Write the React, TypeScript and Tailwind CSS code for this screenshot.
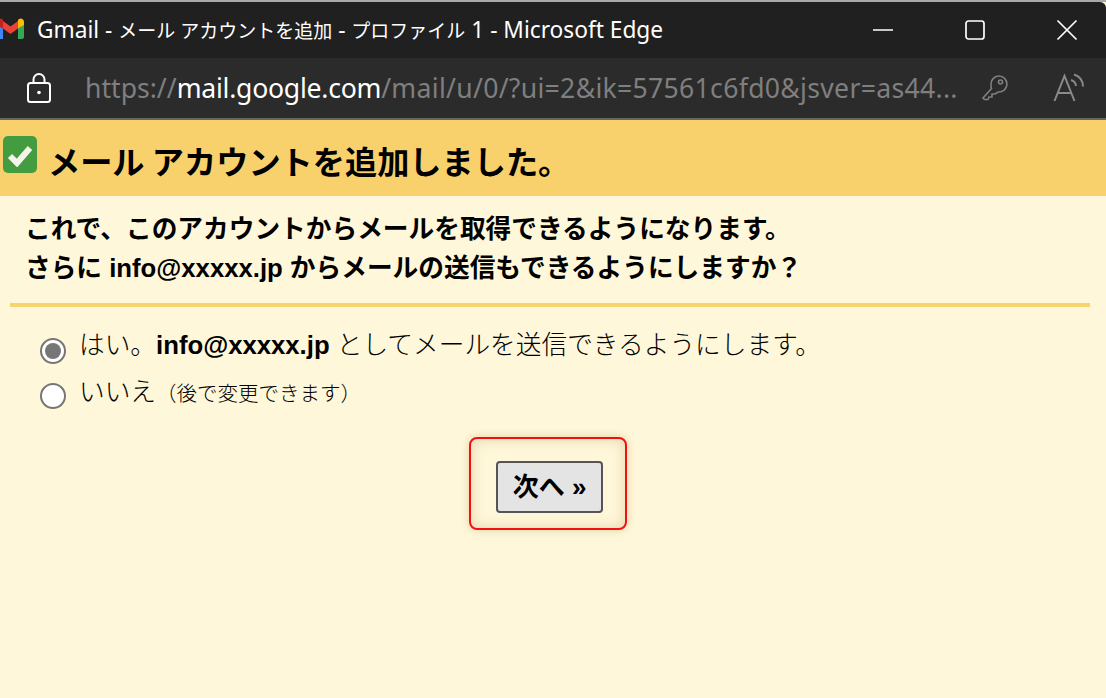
import React from 'react';

const sans = "font-['Noto_Sans','Noto_Sans_CJK_JP',sans-serif]";
const arial = "font-['Liberation_Sans','Noto_Sans_CJK_JP',sans-serif]";

const GmailLogo = () => (
    <svg width="27" height="21" viewBox="0 0 27 21" className="shrink-0 ml-[-3px] mt-[-3px]">
        <path d="M0 6.500l6 4V21H2a2 2 0 0 1-2-2z" fill="#4285f4" />
        <path d="M21 21V10.500l6-4V19a2 2 0 0 1-2 2z" fill="#34a853" />
        <path d="M21 10.500V2l.8-.8C24-.5 27 1 27 4v3z" fill="#fbbc04" />
        <path d="M6 10.500V3l7.500 5.600L21 3v7.500L13.500 16z" fill="#ea4335" />
        <path d="M0 7V4C0 1 3-.5 5 1l1 .8v8.700z" fill="#c5221f" />
    </svg>
);

const Radio = ({ checked }: { checked?: boolean }) => (
    <span className="w-[26px] h-[26px] rounded-full border-[2px] border-[#767676] bg-white flex items-center justify-center shrink-0">
        {checked && <span className="w-[16px] h-[16px] rounded-full bg-[#767676]" />}
    </span>
);

export default function App() {
    return (
        <div className={`w-[1106px] h-[698px] overflow-hidden flex flex-col bg-[#fff7d9] ${sans}`}>
            {/* window chrome */}
            <div className="h-[2px] bg-[#a9a9a9]" />
            <div className="h-[56px] bg-[#202020] flex items-center text-white rounded-tr-[6px]">
                <GmailLogo />
                <span className="ml-[13px] text-[22.700px] leading-none whitespace-nowrap">Gmail - <span className="text-[19px]">メール アカウントを追加</span> - <span className="text-[19px]">プロファイル</span> 1 - Microsoft Edge</span>
                <div className="ml-auto flex items-center">
                    <svg width="22" height="22" viewBox="0 0 22 22" className="mr-[70px]"><path d="M1 11h20" stroke="#fff" strokeWidth="1.500" /></svg>
                    <svg width="22" height="22" viewBox="0 0 22 22" className="mr-[70px]"><rect x="2" y="2" width="18" height="18" rx="2.500" fill="none" stroke="#fff" strokeWidth="1.700" /></svg>
                    <svg width="22" height="22" viewBox="0 0 22 22" className="mr-[28px]"><path d="M1.500 1.500l19 19M20.500 1.500l-19 19" stroke="#fff" strokeWidth="1.700" /></svg>
                </div>
            </div>
            <div className="h-[60px] bg-[#2b2b2b] flex items-center">
                <svg width="26" height="32" viewBox="0 0 26 32" className="ml-[26px] shrink-0">
                    <rect x="2" y="11" width="22" height="19" rx="2.500" fill="none" stroke="#fff" strokeWidth="2" />
                    <path d="M7.500 11V7.500a5.500 5.500 0 0 1 11 0V11" fill="none" stroke="#fff" strokeWidth="2" />
                    <circle cx="13" cy="20.500" r="1.800" fill="#fff" />
                </svg>
                <span className="ml-[33px] text-[26.600px] leading-none whitespace-nowrap text-[#7f7f7f]">
                    https://<span className="text-white tracking-[-0.25px]">mail.google.com</span><span className="tracking-[0.3px]">/mail/u/0/?ui=2&amp;ik=57561c6fd0&amp;jsver=as44...</span>
                </span>
                <div className="ml-auto flex items-center">
                    <svg width="28" height="28" viewBox="0 0 28 28" className="mr-[44px]" fill="none" stroke="#7f7f7f" strokeWidth="1.600">
                        <path d="M10 11a8 8 0 1 1 7 7l-3 2h-3v3h-3l-1 2.500H3.500L2 24l8.500-9.500A8 8 0 0 1 10 11z" />
                        <circle cx="19.500" cy="8" r="2" />
                    </svg>
                    <svg width="32" height="30" viewBox="0 0 32 30" className="mr-[21px]" fill="none" stroke="#8a8a8a" strokeWidth="2">
                        <path d="M1.500 28L11.500 3l10 25M5 20h13" />
                        <path d="M18 7a7 7 0 0 1 5 6M21 1.500a12 12 0 0 1 9 12" />
                    </svg>
                </div>
            </div>
            <div className="h-[2px] bg-[#666666]" />

            {/* success banner */}
            <div className="h-[76px] bg-[#f8d06c] flex shrink-0 pl-[3px]">
                <span className="mt-[16px] w-[34px] h-[37px] rounded-[5px] bg-[#439c3f] flex items-center justify-center shrink-0">
                    <svg width="26" height="24" viewBox="0 0 26 24"><path d="M3 13l7 7L23 5" fill="none" stroke="#f4f4ea" strokeWidth="6" /></svg>
                </span>
                <h1 className="ml-[11px] mt-[20px] text-[32.200px] leading-[40px] font-bold text-black whitespace-nowrap font-['Noto_Sans_CJK_JP',sans-serif]">メール アカウントを追加しました。</h1>
            </div>

            {/* message */}
            <div className={`pl-[25px] pt-[14px] text-[25.700px] leading-[39px] font-bold text-black whitespace-nowrap ${arial}`}>
                <p>これで、このアカウントからメールを取得できるようになります。</p>
                <p>さらに info@xxxxx.jp からメールの送信もできるようにしますか？</p>
            </div>
            <div className="ml-[10px] mr-[16px] mt-[15px] h-[4px] bg-[#f8d46e]" />

            {/* options */}
            <div className={`pl-[40px] pt-[20px] flex flex-col text-black whitespace-nowrap ${arial}`}>
                <label className="flex h-[38px]">
                    <span className="mt-[11px]"><Radio checked /></span>
                    <span className="ml-[13px] text-[25.700px] leading-[36px] font-light">はい。<b className="font-bold">info@xxxxx.jp</b> としてメールを送信できるようにします。</span>
                </label>
                <label className="flex h-[38px] mt-[8px]">
                    <span className="mt-[10px]"><Radio /></span>
                    <span className="ml-[13px] text-[25.700px] leading-[38px] font-light">いいえ<span className="text-[20.500px]">（後で変更できます）</span></span>
                </label>
            </div>

            {/* next button */}
            <div className="flex justify-center mt-[26px] pr-[10px]">
                <div className="w-[158px] h-[93px] rounded-[8px] border-2 border-[#f50f0f] shadow-[inset_0_0_14px_rgba(150,130,70,0.28),0_0_8px_rgba(150,130,70,0.3)] flex items-center justify-center pt-[7px] pl-[3px]">
                    <button className={`w-[107px] h-[52px] rounded-[4px] border-2 border-[#555555] bg-[#e4e4e4] text-[26px] font-bold text-black ${arial}`}>次へ »</button>
                </div>
            </div>
        </div>
    );
}
